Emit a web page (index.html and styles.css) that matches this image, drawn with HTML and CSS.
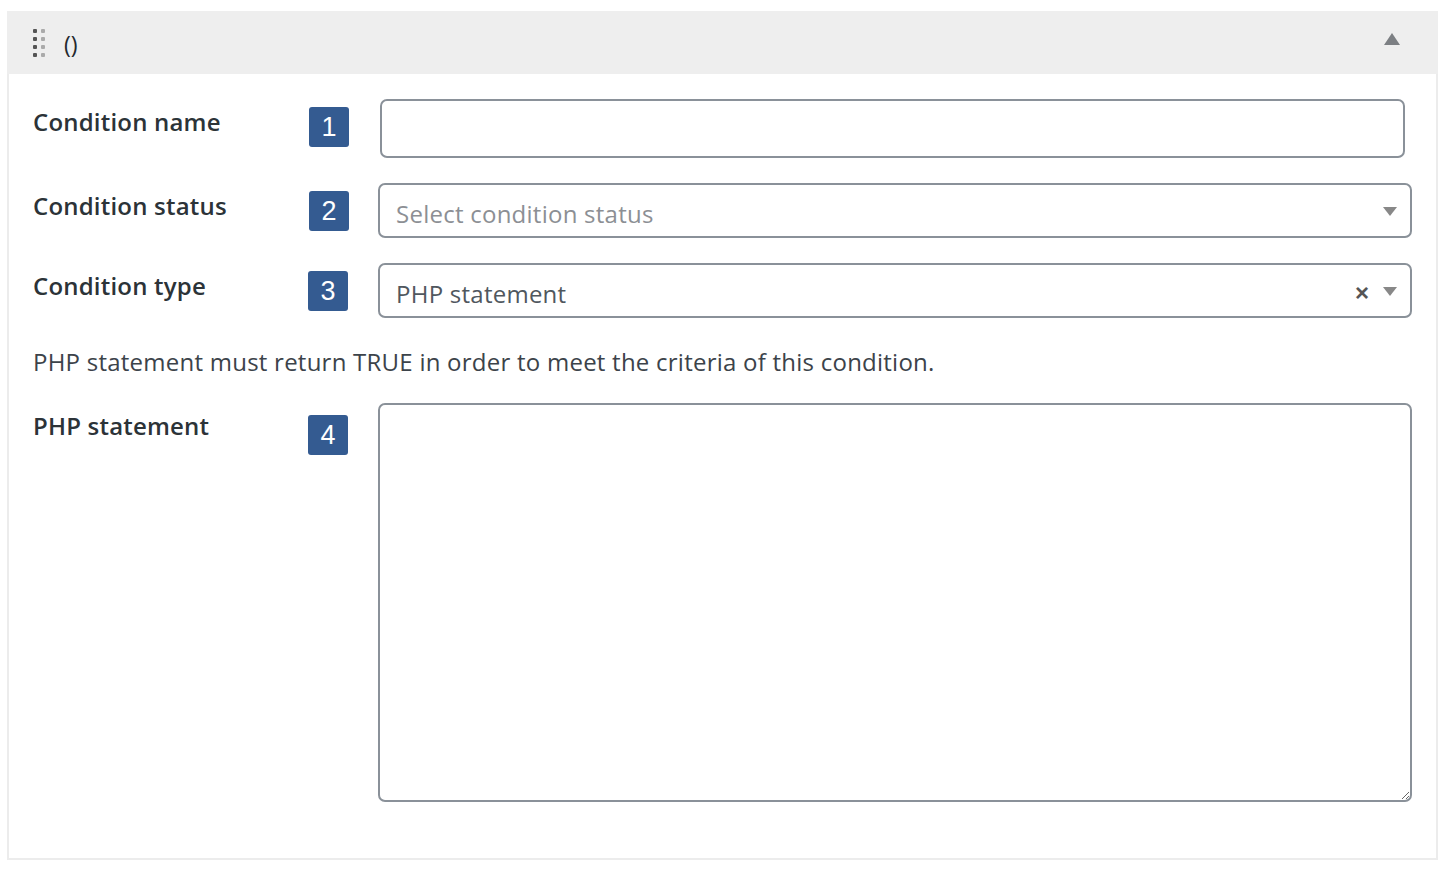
FILE: index.html
```html
<!DOCTYPE html>
<html>
<head>
<meta charset="utf-8">
<link rel="stylesheet" href="styles.css">
</head>
<body>
<div class="panel">
  <div class="panel-head">
    <span class="handle">
      <i class="d dk"></i><i class="d lt"></i>
      <i class="d dk"></i><i class="d lt"></i>
      <i class="d dk"></i><i class="d lt"></i>
      <i class="d dk"></i><i class="d lt"></i>
    </span>
    <span class="title">()</span>
    <span class="toggle"></span>
  </div>
  <div class="panel-body">
    <div class="row">
      <div class="label">Condition name</div>
      <div class="badge">1</div>
      <div class="field"><input class="text-input" type="text"></div>
    </div>
    <div class="row">
      <div class="label">Condition status</div>
      <div class="badge">2</div>
      <div class="field wide">
        <div class="select"><span class="placeholder">Select condition status</span><span class="caret"></span></div>
      </div>
    </div>
    <div class="row">
      <div class="label">Condition type</div>
      <div class="badge shift">3</div>
      <div class="field wide">
        <div class="select"><span class="value">PHP statement</span><span class="clear">×</span><span class="caret"></span></div>
      </div>
    </div>
    <p class="desc">PHP statement must return TRUE in order to meet the criteria of this condition.</p>
    <div class="row">
      <div class="label">PHP statement</div>
      <div class="badge shift low">4</div>
      <div class="field wide"><textarea class="textarea"></textarea></div>
    </div>
  </div>
</div>
</body>
</html>
```

FILE: styles.css
```css
html, body { margin: 0; padding: 0; background: #fff; }
body { font-family: "Open Sans", "Noto Sans", sans-serif; color: #32373c; }

.panel {
  margin: 11px 0 0 7px;
  width: 1431px;
  height: 849px;
  box-sizing: border-box;
  border: 2px solid #ececec;
  border-top: none;
}
.panel-head {
  height: 63px;
  margin: 0 -2px;
  background: #eeeeee;
  display: flex;
  align-items: center;
  padding-left: 26px;
  position: relative;
}
.handle {
  display: grid;
  grid-template-columns: 4px 4px;
  grid-auto-rows: 4px;
  column-gap: 4px;
  row-gap: 4px;
}
.d { display: block; width: 4px; height: 4px; border-radius: 1px; }
.dk { background: #555; }
.lt { background: #aaa; }
.title {
  margin-left: 19px;
  font-size: 23px;
  color: #23282d;
  line-height: 30px;
  margin-top: 2px;
}
.toggle {
  position: absolute;
  right: 38px;
  top: 22px;
  width: 0; height: 0;
  border-left: 8px solid transparent;
  border-right: 8px solid transparent;
  border-bottom: 12px solid #7c7f83;
}
.panel-body {
  padding: 25px 0 0 24px;
}
.row {
  display: flex;
  align-items: flex-start;
  margin-bottom: 25px;
}
.label {
  width: 276px;
  font-size: 24px;
  font-weight: 600;
  line-height: 30px;
  margin-top: 8px;
  color: #2c3338;
  letter-spacing: 0.2px;
}
.badge {
  width: 40px;
  height: 40px;
  background: #345b91;
  color: #fff;
  border-radius: 3px;
  font-size: 27px;
  line-height: 40px;
  text-align: center;
  margin-top: 8px;
  font-family: "Liberation Sans", Arial, sans-serif;
}
.badge.shift { margin-left: -1px; }
.badge.low { margin-top: 12px; }
.field { margin-left: 30px; }
.field.wide { margin-left: 29px; }
.badge.shift + .field.wide { margin-left: 30px; }
.text-input {
  display: block;
  width: 1025px;
  height: 59px;
  box-sizing: border-box;
  margin-left: 1px;
  border: 2px solid #8a9199;
  border-radius: 7px;
  outline: none;
  background: #fff;
}
.select {
  width: 1034px;
  height: 55px;
  box-sizing: border-box;
  border: 2px solid #8a9199;
  border-radius: 7px;
  display: flex;
  align-items: center;
  padding: 5px 0 0 16px;
  font-size: 24px;
  position: relative;
  letter-spacing: 0.25px;
}
.placeholder { color: #8c8f94; }
.value { color: #50575e; }
.caret {
  position: absolute;
  right: 13px;
  top: 22px;
  width: 0; height: 0;
  border-left: 7px solid transparent;
  border-right: 7px solid transparent;
  border-top: 9px solid #888;
}
.clear {
  position: absolute;
  right: 41px;
  top: 13px;
  font-size: 24px;
  font-weight: 700;
  color: #555;
  line-height: 30px;
  letter-spacing: 0;
  font-family: "Liberation Sans", Arial, sans-serif;
}
.desc {
  margin: 29px 0 26px 0;
  font-size: 24px;
  line-height: 30px;
  color: #3c434a;
  letter-spacing: 0.24px;
}
.textarea {
  display: block;
  width: 1034px;
  height: 399px;
  box-sizing: border-box;
  border: 2px solid #8a9199;
  border-radius: 7px;
  outline: none;
  resize: both;
  background: #fff;
}
```
